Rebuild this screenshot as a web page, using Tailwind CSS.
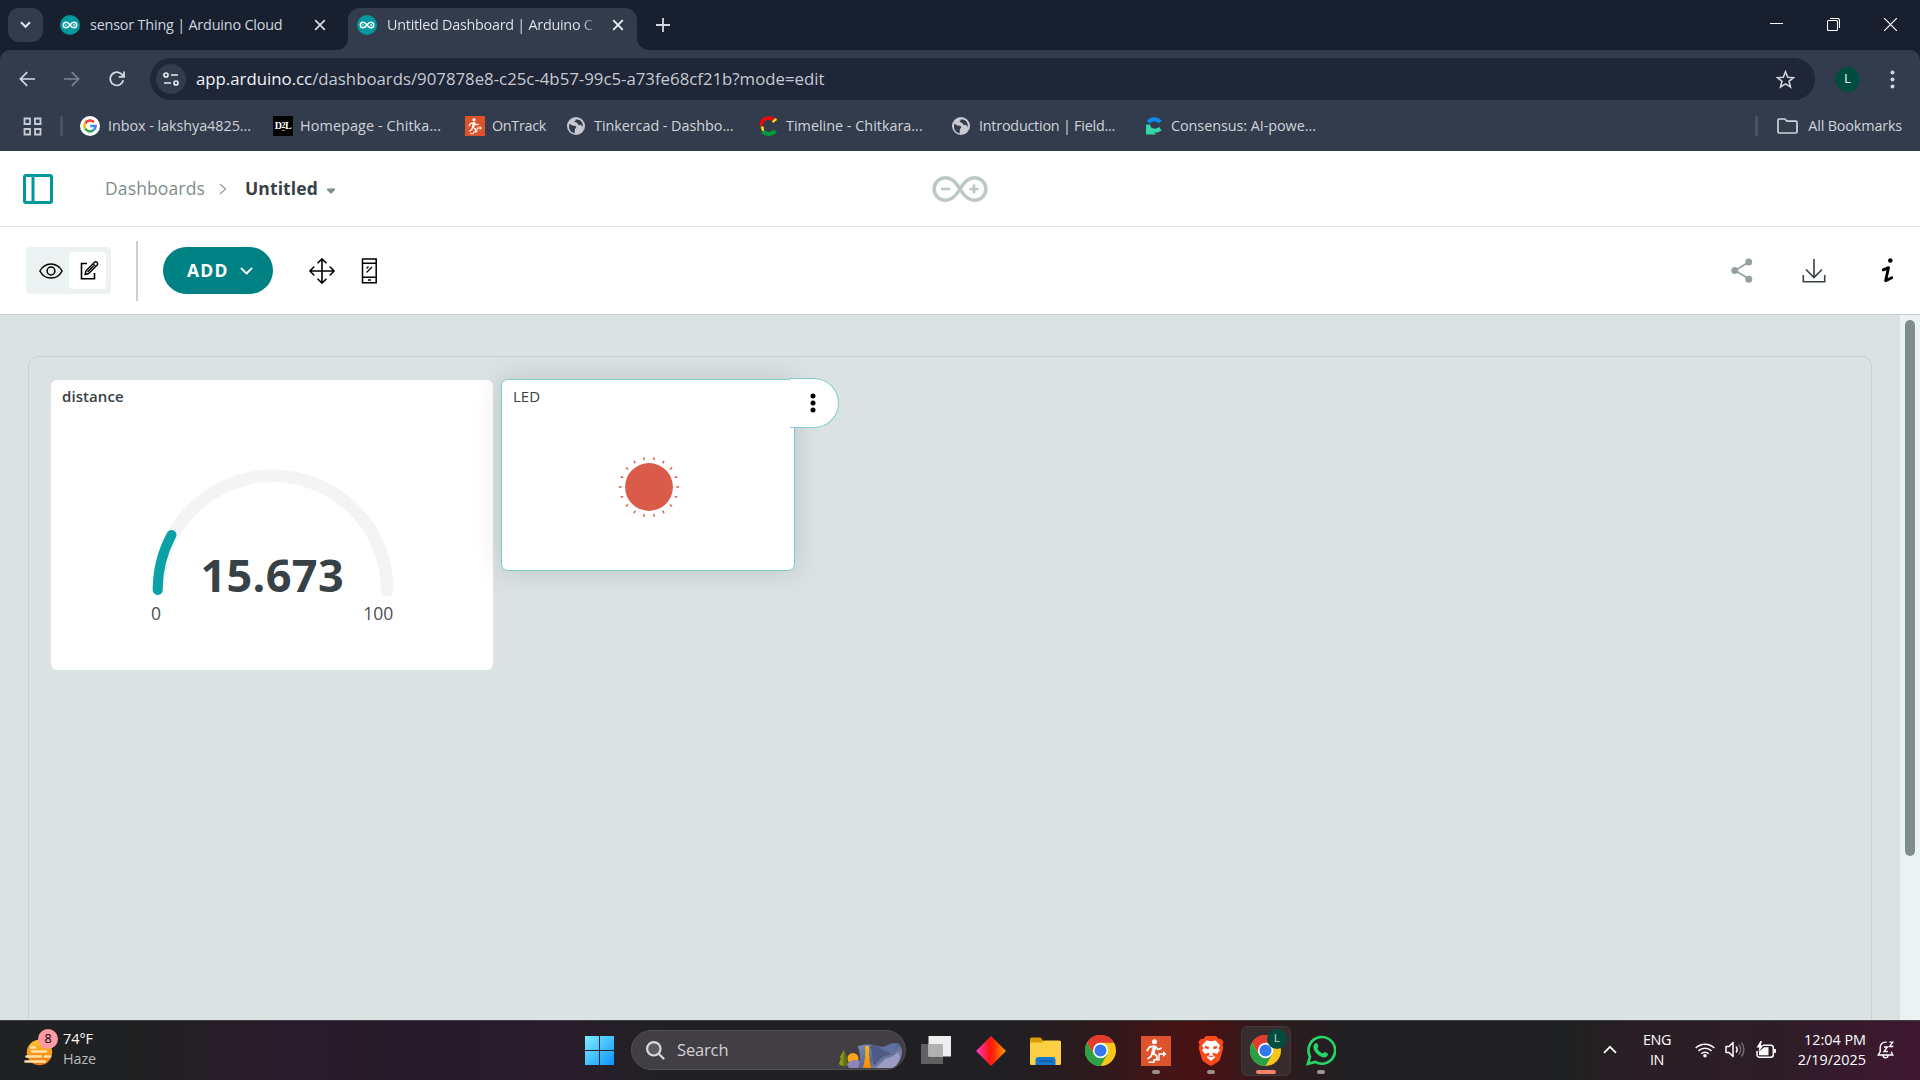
<!DOCTYPE html>
<html lang="en">
<head>
<meta charset="utf-8">
<title>Untitled Dashboard | Arduino Cloud</title>
<script src="https://cdn.jsdelivr.net/npm/@tailwindcss/browser@4"></script>
</head>
<body class="w-[1920px] h-[1080px] overflow-hidden flex flex-col font-['Open_Sans','Noto_Sans',sans-serif] bg-[#dae2e3]">

<svg class="hidden">
  <defs>
    <symbol id="ard" viewBox="0 0 20 20"><circle cx="10" cy="10" r="10" fill="#00979d"/><path d="M10 10C8.700 8.100 7.700 7.200 6.100 7.200a2.800 2.800 0 0 0 0 5.600C7.700 12.800 8.700 11.900 10 10s2.300-2.800 3.900-2.800a2.800 2.800 0 0 1 0 5.600C12.300 12.800 11.300 11.900 10 10Z" fill="none" stroke="#fff" stroke-width="1.500"/><path d="M5 10h2M13 10h2M14 9v2" stroke="#fff" stroke-width=".8"/></symbol>
    <symbol id="globe" viewBox="0 0 18 18"><circle cx="9" cy="9" r="9" fill="#c6c9d0"/><path d="M2.300 6.800 5.500 8.500c1.500.3 3.300.2 3.700 1.500.3 1.200-1.200 1.300-1.400 2.400-.1 1 .2 2.200-.3 4C4.500 16 2 13 2 9.800ZM8.800 2.200c.3 1.300-1.300 1.500-1.200 2.600.2 1 1.600.6 2.600 1.100.9.500.7 1.600 1.600 2 .9.500 1.500-.4 2.300 0 .7.400.6 1.400 1.700 1.800.3-3.500-1.300-5.400-3.300-6.600Z" fill="#333c4d"/></symbol>
    <symbol id="chrome" viewBox="0 0 30 30"><circle cx="15" cy="15" r="15" fill="#f9c61c"/><path d="M2 7.500A15 15 0 0 1 28 7.500H15l-6.500 11.200Z" fill="#e33b2e"/><path d="M2 7.500 8.600 18.800 15 22.300 21.500 18.800 15 30A15 15 0 0 1 2 7.500Z" fill="#2aa147"/><circle cx="15" cy="15" r="7.400" fill="#fff"/><circle cx="15" cy="15" r="5.800" fill="#2f78ee"/></symbol>
    <symbol id="ontrack" viewBox="0 0 30 30"><path fill="#dc532c" d="M0 0h30v30H0z"/><circle cx="13.500" cy="5.800" r="2.500" fill="#fff"/><path d="M14 10 11.800 17" stroke="#fff" stroke-width="3.400"/><path d="M13 10.200 8.500 11 6.200 14.500M14.500 10.500 17 13.500 20 12.300M12 17l3.800 3V23.500M11.300 17 10 20.500 7 22.500" fill="none" stroke="#fff" stroke-width="1.800" stroke-linecap="round" stroke-linejoin="round"/><path d="M7.500 26.300h5.500v-2.500h5V18h4.500" fill="none" stroke="#fff" stroke-width="1.400"/><path d="m22 15 3.500 3-3.500 3" fill="#fff"/></symbol>
  </defs>
</svg>

<!-- Tab strip -->
<div class="h-[50px] shrink-0 bg-[#182030] flex items-start text-[14.4px] text-[#d0d4df]">
  <div class="ml-2 mt-2 w-[35px] h-[34px] rounded-[11px] bg-[#333c4d] flex items-center justify-center">
    <svg width="11" height="8" viewBox="0 0 11 8"><path d="m1 1.300 4.500 4.500L10 1.300" fill="none" stroke="#e3e6ee" stroke-width="2"/></svg>
  </div>
  <div class="ml-[17px] h-[50px] w-[288px] flex items-center">
    <svg class="w-5 h-5 shrink-0"><use href="#ard"/></svg>
    <span class="ml-[10px] w-[224px] whitespace-nowrap tracking-[-0.19px]">sensor Thing | Arduino Cloud</span>
    <svg width="12" height="12" viewBox="0 0 12 12"><path d="m1.200 1.200 9.600 9.600M10.800 1.200 1.200 10.800" stroke="#d5d9e4" stroke-width="1.700"/></svg>
  </div>
  <div class="relative mt-2 w-[289px] h-[42px] bg-[#333c4d] rounded-t-[12px] flex items-center pb-2 text-[#e6e9f0]">
    <svg class="absolute -left-3 bottom-0" width="12" height="12"><path d="M12 0v12H0A12 12 0 0 0 12 0" fill="#333c4d"/></svg>
    <svg class="absolute -right-3 bottom-0" width="12" height="12"><path d="M0 0v12h12A12 12 0 0 1 0 0" fill="#333c4d"/></svg>
    <svg class="ml-[9px] w-5 h-5 shrink-0"><use href="#ard"/></svg>
    <span class="ml-[10px] w-[210px] whitespace-nowrap tracking-[-0.27px] bg-linear-to-r from-[#e6e9f0] from-92% to-[#e6e9f0]/15 bg-clip-text text-transparent">Untitled Dashboard | Arduino C</span>
    <svg class="ml-[15px]" width="12" height="12" viewBox="0 0 12 12"><path d="m1.200 1.200 9.600 9.600M10.800 1.200 1.200 10.800" stroke="#f0f2f7" stroke-width="1.800"/></svg>
  </div>
  <svg class="ml-[19px] mt-[18px]" width="14" height="14"><path d="M7 0v14M0 7h14" stroke="#d5d9e4" stroke-width="1.800"/></svg>
  <div class="ml-auto mr-[23px] mt-[18px] flex items-center gap-[44px]">
    <svg width="13" height="13"><path d="M0 5.500h13" stroke="#fff"/></svg>
    <svg width="13" height="13" viewBox="0 0 13 13"><path d="M.5 3.500a1 1 0 0 1 1-1h8a1 1 0 0 1 1 1v8a1 1 0 0 1-1 1h-8a1 1 0 0 1-1-1ZM3 .5h7.500a2 2 0 0 1 2 2V10" fill="none" stroke="#fff" stroke-width="1.100"/></svg>
    <svg width="13" height="13"><path d="m0 0 13 13M13 0 0 13" stroke="#fff" stroke-width="1.200"/></svg>
  </div>
</div>

<div class="h-[101px] shrink-0 bg-[#182030]">
<div class="h-full rounded-t-[10px] bg-[#333c4d] flex flex-col">
  <!-- Address row -->
  <div class="h-[58px] flex items-center">
    <div class="w-[150px] flex items-center pl-[19px]">
      <svg width="16" height="16" viewBox="0 0 16 16"><path d="M16 8H1.500M8.200 1.200 1.400 8l6.800 6.800" fill="none" stroke="#d5d9e4" stroke-width="1.700"/></svg>
      <svg class="ml-[29px]" width="16" height="16" viewBox="0 0 16 16"><path d="M0 8h14.500M7.800 1.200 14.600 8l-6.800 6.800" fill="none" stroke="#7c8493" stroke-width="1.700"/></svg>
      <svg class="ml-[29px]" width="16" height="16" viewBox="0 0 16 16"><path d="M14.300 9.300A6.600 6.600 0 1 1 12.800 3.400L14.500 5.200M15 .5v5.300H9.700" fill="none" stroke="#d5d9e4" stroke-width="1.800"/></svg>
    </div>
    <div class="w-[1665px] h-[42px] rounded-full bg-[#1e2637] flex items-center">
      <div class="ml-[6px] w-[30px] h-[30px] rounded-full bg-[#333c4d] flex items-center justify-center">
        <svg width="16" height="14" viewBox="0 0 16 14"><g fill="none" stroke="#e3e6ee" stroke-width="1.700"><circle cx="3" cy="3" r="2"/><circle cx="13" cy="11" r="2"/><path d="M8 3h7M1 11h7"/></g></svg>
      </div>
      <span class="ml-[10px] text-[16.8px] text-[#c7cad1] whitespace-nowrap"><span class="text-[#f1f3f8]">app.arduino.cc</span>/dashboards/907878e8-c25c-4b57-99c5-a73fe68cf21b?mode=edit</span>
      <svg class="ml-auto mr-[20px]" width="19" height="19" viewBox="0 0 19 19"><path d="m9.500 1.800 2.200 5.400 5.800.4-4.500 3.700 1.500 5.700-5-3.100-5 3.100L6 11.300 1.500 7.600l5.800-.4Z" fill="none" stroke="#d0d3da" stroke-width="1.600"/></svg>
    </div>
    <div class="ml-[20px] w-[25px] h-[25px] rounded-full bg-[#004d40] text-[#e0ece9] text-[12.500px] flex items-center justify-center font-['Roboto',sans-serif]">L</div>
    <svg class="ml-[30px]" width="5" height="19" fill="#d0d4df"><circle cx="2.500" cy="2.500" r="2"/><circle cx="2.500" cy="9.500" r="2"/><circle cx="2.500" cy="16.500" r="2"/></svg>
  </div>
  <!-- Bookmarks row -->
  <div class="h-[36px] flex items-center pl-[23px] text-[14.4px] text-[#d0d3da] whitespace-nowrap">
    <svg width="19" height="19" viewBox="0 0 19 19" fill="none" stroke="#c9ccd4" stroke-width="1.800"><path d="M1.500 1.500h5.500v5.500H1.500zM12 1.500h5.500v5.500H12zM1.500 12h5.500v5.500H1.500zM12 12h5.500v5.500H12z"/></svg>
    <div class="ml-[18px] w-[3px] h-5 rounded bg-[#4a5364]"></div>
    <div class="ml-[17px] w-[193px] flex items-center">
      <div class="w-5 h-5 rounded-full bg-white flex items-center justify-center">
        <svg width="14" height="14" viewBox="0 0 14 14" fill="none" stroke-width="2.600"><path d="M2.200 4.300A5.600 5.600 0 0 1 11 3.100" stroke="#ea4335"/><path d="M2.200 4.300a5.600 5.600 0 0 0 0 5.400" stroke="#fbbc05"/><path d="M2.200 9.700a5.600 5.600 0 0 0 8.600 1.200" stroke="#34a853"/><path d="M10.800 10.900A5.500 5.500 0 0 0 12.600 7H7.200" stroke="#4285f4"/></svg>
      </div>
      <span class="ml-2 tracking-[-0.06px]">Inbox - lakshya4825...</span>
    </div>
    <div class="w-[192px] flex items-center">
      <div class="w-5 h-5 bg-black text-white text-[10px] font-bold font-['Liberation_Serif',serif] flex items-center justify-center tracking-[-0.5px]">D<span class="text-[8px] border-b border-[#e87511] leading-[9px]">2</span>L</div>
      <span class="ml-[7px] tracking-[0.1px]">Homepage - Chitka...</span>
    </div>
    <div class="w-[102px] flex items-center">
      <svg class="w-5 h-5"><use href="#ontrack"/></svg>
      <span class="ml-[7px] tracking-[-0.33px]">OnTrack</span>
    </div>
    <div class="w-[192px] flex items-center">
      <svg class="w-[18px] h-[18px]"><use href="#globe"/></svg>
      <span class="ml-[9px] tracking-[-0.05px]">Tinkercad - Dashbo...</span>
    </div>
    <div class="w-[193px] flex items-center">
      <svg width="18" height="20" viewBox="0 0 18 20" fill="none"><path d="M2.300 9.500C2 5 5.500 2 9.500 2c2 0 4 .5 5.500 1.500" stroke="#f40606" stroke-width="3.600"/><path d="m13.500 6 4-3" stroke="#ffd90a" stroke-width="2.200"/><path d="M1.500 10.500h3.200l.4 4.500H3Z" fill="#ffd90a"/><path d="M3.800 15.300c2.200 3 8.200 4 12.700-.3" stroke="#079a3c" stroke-width="4"/></svg>
      <span class="ml-[9px]">Timeline - Chitkara...</span>
    </div>
    <div class="w-[193px] flex items-center">
      <svg class="w-[18px] h-[18px]"><use href="#globe"/></svg>
      <span class="ml-[9px] tracking-[-0.24px]">Introduction | Field...</span>
    </div>
    <div class="flex items-center">
      <svg width="18" height="19" viewBox="0 0 18 19" fill="none"><path d="M3.500 6.300C6 2.300 12 2.300 15 6" stroke="#0a8cf0" stroke-width="4.200"/><path d="M3 8.500c0 5 6 8.500 12.500 4.300" stroke="#35d5ac" stroke-width="4"/><path d="M1 9.500v9h10L5 12Z" fill="#35d5ac"/></svg>
      <span class="ml-2 tracking-[-0.06px]">Consensus: AI-powe...</span>
    </div>
    <div class="ml-auto w-[3px] h-5 rounded bg-[#4a5364]"></div>
    <svg class="ml-[19px]" width="21" height="16" viewBox="0 0 21 16"><path d="M1 2.200A1.200 1.200 0 0 1 2.200 1h5.600l2.200 2.200h8.800A1.200 1.200 0 0 1 20 4.400v9.400a1.200 1.200 0 0 1-1.200 1.200H2.200A1.200 1.200 0 0 1 1 13.800Z" fill="none" stroke="#d0d3da" stroke-width="1.700"/></svg>
    <span class="ml-[10px] mr-[18px] tracking-[-0.17px]">All Bookmarks</span>
  </div>
</div>
</div>

<!-- App header -->
<header class="h-[76px] shrink-0 bg-white border-b border-[#dae3e3] flex items-center">
  <svg class="ml-[23px]" width="30" height="30"><rect x="1.500" y="1.500" width="27" height="27" rx="1.500" fill="none" stroke="#00979d" stroke-width="3"/><path d="M10 2v26" stroke="#00979d" stroke-width="3"/></svg>
  <nav class="ml-[52px] w-[300px] flex items-center text-[17.5px]">
    <span class="text-[#7f8c8d] tracking-[0.13px]">Dashboards</span>
    <svg class="ml-[14px]" width="8" height="12"><path d="m1 1 5.500 5L1 11" fill="none" stroke="#95a5a6" stroke-width="1.400"/></svg>
    <span class="ml-[18px] font-bold text-[#374146] tracking-[0.12px]">Untitled</span>
    <svg class="ml-[9px] mt-1" width="8" height="6"><path d="M0 .5h8V2L4.500 5.500h-1L0 2Z" fill="#7f8c8d"/></svg>
  </nav>
  <svg class="ml-[526px]" width="58" height="26" viewBox="0 0 58 26" fill="none" stroke="#bdc7c8"><path d="M29 13C25 6 21 1.800 14.500 1.800a11.400 11.200 0 0 0 0 22.400C21 24.200 25 20 29 13S37 1.800 43.500 1.800a11.400 11.200 0 0 1 0 22.400C37 24.200 33 20 29 13Z" stroke-width="3.500"/><path d="M10 13h9M38.500 13h9M43 8.500v9" stroke-width="2.600"/></svg>
</header>

<!-- Toolbar -->
<div class="h-[88px] shrink-0 bg-white border-b border-[#c3cfd0] flex items-center">
  <div class="ml-[26px] w-[85px] h-[47px] rounded bg-[#ecf1f1] flex items-center p-[5px]">
    <div class="w-[38px] flex pl-2">
      <svg class="shrink-0" width="24" height="16" viewBox="0 0 24 16" fill="none" stroke="#000" stroke-width="1.500"><path d="M.9 8C3 4 7 .9 12 .9S21 4 23.100 8C21 12 17 15.100 12 15.100S3 12 .9 8Z"/><circle cx="12" cy="8" r="3.900"/></svg>
    </div>
    <div class="w-[37px] h-[37px] rounded bg-white flex items-center justify-center shrink-0 pl-1">
      <svg width="19" height="19" viewBox="0 0 19 19" fill="none" stroke="#000" stroke-width="1.600"><path d="M7 2.500H1.500v15.300h13V12"/><path d="M5 13.500 6 9.800 14.500 1.300a1.600 1.600 0 0 1 2.300 0l.4.400a1.600 1.600 0 0 1 0 2.300L8.700 12.500ZM13 2.900l2.700 2.700M7.500 11l6-6" stroke-linejoin="round" stroke-width="1.400"/></svg>
    </div>
  </div>
  <div class="ml-[25px] w-[2px] h-[60px] bg-[#c9d2d3]"></div>
  <button class="ml-[25px] w-[110px] h-[47px] rounded-full bg-[#008184] text-white font-bold text-[17.5px] tracking-[1.2px] flex items-center pl-6">ADD
    <svg class="ml-[11px]" width="13" height="8"><path d="m1.500 1.500 5 5 5-5" fill="none" stroke="#fff" stroke-width="1.800" stroke-linecap="round" stroke-linejoin="round"/></svg>
  </button>
  <svg class="ml-[36px]" width="26" height="26" viewBox="0 0 26 26" fill="none" stroke="#000" stroke-width="1.600" stroke-linecap="round" stroke-linejoin="round"><path d="M13 1v24M1 13h24M9 4.800 13 .9l4 3.900M9 21.200l4 3.900 4-3.900M4.800 9 .9 13l3.900 4M21.200 9l3.900 4-3.900 4"/></svg>
  <svg class="ml-[26px]" width="17" height="26" viewBox="0 0 17 26" fill="none" stroke="#000" stroke-width="1.500"><path d="M1.500 1h13.700v23.800H1.500ZM1.500 5.200H15M1.500 19.300H15"/><path d="m5.500 10.500 2-2M5.500 14.500l5.500-5.500" stroke-width="1.300"/><path d="M7 22h3"/></svg>
  <div class="ml-auto flex items-center">
    <svg width="22" height="25" viewBox="0 0 22 25"><path d="M18 4 4 12.500 18 21" fill="none" stroke="#95a0a3" stroke-width="1.600"/><g fill="#95a0a3"><circle cx="17.700" cy="3.900" r="3.500"/><circle cx="3.800" cy="12.500" r="3.500"/><circle cx="17.700" cy="21.200" r="3.500"/></g></svg>
    <svg class="ml-[49px]" width="24" height="24" viewBox="0 0 24 24" fill="none" stroke="#374146" stroke-width="1.600"><path d="M12 0v18M4 10.500 12 18.500l8-8M1.300 16v6.800h21.400V16"/></svg>
    <svg class="ml-[56px] mr-[27px]" width="11" height="25" viewBox="0 0 11 25"><circle cx="8.300" cy="2.500" r="2.300"/><path d="M1.200 11.800 6.500 9.700 3.600 22.700 9.800 19.700" fill="none" stroke="#000" stroke-width="2.900" stroke-linejoin="round" stroke-linecap="round"/></svg>
  </div>
</div>

<!-- Dashboard canvas -->
<main class="h-[705px] shrink-0 overflow-hidden flex bg-[#dae2e3]">
  <div class="w-[1900px] pl-7 pt-[41px]">
    <section class="w-[1844px] h-[760px] rounded-[10px] border border-[#c9d2d3] pl-[22px] pt-[22px] flex items-start text-[#374146]">
      <article class="w-[442px] h-[290px] mt-px rounded-[6px] bg-white flex flex-col">
        <h2 class="pl-[11px] pt-[6px] text-[15px] leading-5 font-semibold tracking-[0.08px]">distance</h2>
        <svg class="mt-[55px]" width="442" height="200" viewBox="0 81 442 200">
          <path d="M107.700 210A114.300 114.300 0 0 1 336.300 210" fill="none" stroke="#f4f4f4" stroke-width="12.600" stroke-linecap="round"/>
          <path d="M106.700 210A115.300 115.300 0 0 1 120.500 155" fill="none" stroke="#0ca1a6" stroke-width="10" stroke-linecap="round"/>
          <text x="221.200" y="212" text-anchor="middle" font-size="45" font-weight="700" fill="#374146" letter-spacing=".35">15.673</text>
          <text x="105" y="240" text-anchor="middle" font-size="17.500" fill="#4a5054">0</text>
          <text x="327.300" y="240" text-anchor="middle" font-size="17.500" fill="#4a5054">100</text>
        </svg>
      </article>
      <article class="relative ml-2 w-[294px] h-[192px] rounded-[7px] bg-white border border-[#7fcbcd] shadow-[0_0_25px_rgba(95,110,95,0.24)] flex flex-col">
        <h2 class="pl-[11px] pt-[6px] text-[15px] leading-5 font-medium">LED</h2>
        <svg class="ml-[115px] mt-[49px]" width="64" height="64" viewBox="-32 -32 64 64">
          <circle r="23.900" fill="#da5b4a"/>
          <circle r="28.700" fill="none" stroke="#da5b4a" stroke-width="2.800" pathLength="180" stroke-dasharray="1.400 8.600" stroke-dashoffset=".7"/>
        </svg>
        <div class="absolute left-[288px] -top-[2px] w-[49px] h-[50px] rounded-r-full bg-white border border-l-0 border-[#7fcbcd] flex items-center justify-center pr-[2px]">
          <svg width="6" height="20"><circle cx="3" cy="3" r="2.500"/><circle cx="3" cy="10" r="2.500"/><circle cx="3" cy="17" r="2.500"/></svg>
        </div>
      </article>
    </section>
  </div>
  <div class="w-5 bg-[#ecf1f1] pl-[5px] pt-[5px]"><div class="w-[10px] h-[536px] rounded-full bg-[#7f8c8d]"></div></div>
</main>

<!-- Taskbar -->
<footer class="h-[60px] shrink-0 border-t border-[#3c4040] bg-[linear-gradient(90deg,#202122_0px,#202122_130px,#2b1c2b_270px,#261c29_440px,#2a1d2c_560px,#212124_660px,#202024_1000px,#2c1a1d_1090px,#421517_1160px,#481214_1200px,#301a1c_1270px,#202023_1350px,#202122_1570px,#2b1e25_1640px,#2e1d27_1780px,#401730_1920px)] flex items-center text-white text-[14.4px]">
  <div class="w-[585px] pl-6 pb-[3px] flex items-center">
    <div class="relative w-[36px] h-[36px]">
      <svg width="34" height="36" viewBox="0 0 34 36"><defs><linearGradient id="sun" x2="0" y2="1"><stop stop-color="#ffc22c"/><stop offset="1" stop-color="#f5740d"/></linearGradient></defs><circle cx="15.500" cy="21.500" r="12.700" fill="url(#sun)"/><path d="M7 16.500h4M8 20.500h14M2.500 25.500H17M21 25.500h5M1.500 30.500H21" stroke="#fbe3a9" stroke-width="2.600" stroke-linecap="round"/></svg>
      <div class="absolute left-[14px] -top-[2px] w-5 h-5 rounded-full bg-[#ff99a4] text-black text-[12.500px] leading-5 text-center">8</div>
    </div>
    <div class="ml-[3px] leading-5">
      <div>74°F</div>
      <div class="text-[#b9babb] tracking-[-0.11px]">Haze</div>
    </div>
  </div>
  <svg width="29" height="29" viewBox="0 0 29 29"><defs><linearGradient id="win" x2="1" y2="1"><stop stop-color="#7deeff"/><stop offset="1" stop-color="#0c93fb"/></linearGradient></defs><path d="M0 0h14v14H0zM15 0h14v14H15zM0 15h14v14H0zM15 15h14v14H15z" fill="url(#win)"/></svg>
  <div class="ml-[17px] mb-px w-[275px] h-10 rounded-full bg-[#413f44] border border-[#504e53] flex items-center pl-[14px] overflow-hidden">
    <svg width="19" height="19" viewBox="0 0 19 19" fill="none" stroke="#d6dada" stroke-width="2.200" stroke-linecap="round"><circle cx="7.800" cy="7.800" r="6.700" fill="#5d5d61"/><path d="m13 13 4.500 4.500"/></svg>
    <span class="ml-3 text-[16.500px] tracking-[-0.15px] text-[#d2d2d4]">Search</span>
    <svg class="ml-auto mr-[2px] mt-3" width="64" height="26" viewBox="0 0 64 26"><defs><linearGradient id="rk" x2="1" y2="1"><stop stop-color="#7c8ec0"/><stop offset=".5" stop-color="#59678f"/><stop offset="1" stop-color="#a7a5c8"/></linearGradient><linearGradient id="wf" x2="0" y2="1"><stop stop-color="#f6b717"/><stop offset="1" stop-color="#ff8a00"/></linearGradient></defs>
      <path d="M5 7 0.500 15H2L0 21c2 3 8 3 9 0l-2-6h1Z" fill="#5f7414"/><path d="M5 7 .5 15H2L0 21l4 2Z" fill="#93951a"/>
      <circle cx="14" cy="15.500" r="5.500" fill="#fba51d"/><path d="M8 22c2-5 7-6 13-4v7H10Z" fill="#8d86b2"/>
      <path d="M19 3C26 .5 36 1 43 4c5-1 9-5 15-4 5 2 6 8 4 14-2 6-6 11-10 11H19c3-7 2-15 0-22Z" fill="url(#rk)"/><path d="M31 3c5-2 8-1 10 2l12 7c-6 0-9 1-11 3l-7 8c-2-6-1-13-4-20Z" fill="#4d5a85"/><path d="M46 16c5-1 9-3 13-7l2 5c-1 5-4 10-8 11H37Z" fill="#9b9cc6"/><path d="m44 5 14-5c-1 5-4 9-8 9Z" fill="#5e72a6"/>
      <path d="M26 3h4c0 7 0 15 2 22h-8c2-8 3-15 2-22" fill="url(#wf)"/></svg>
  </div>
  <div class="ml-[2px] flex items-center h-full">
    <div class="w-[55px] flex justify-center">
      <svg width="30" height="29" viewBox="0 0 30 29"><path d="M0 8h22v20H0z" fill="#5f6060"/><path d="M7.500 0H30v20.500H7.500z" fill="#efefef"/><path d="M7.500 8H22v12.500H7.500z" fill="#b1b1b2"/></svg>
    </div>
    <div class="w-[55px] flex justify-center">
      <svg width="30" height="30" viewBox="0 0 30 30"><defs><linearGradient id="dm"><stop stop-color="#ff3cc8"/><stop offset=".45" stop-color="#ff1616"/><stop offset=".6" stop-color="#ff2a08"/><stop offset="1" stop-color="#ffa200"/></linearGradient></defs><path d="m15 0 15 15-15 15L0 15Z" fill="url(#dm)"/></svg>
    </div>
    <div class="w-[55px] flex justify-center">
      <svg width="31" height="28" viewBox="0 0 31 28"><path d="M0 2a1.500 1.500 0 0 1 1.500-1.500h9L13 3.500V10H0Z" fill="#dd9b07"/><path d="M0 5.500h11L14 3.500h15.500A1.500 1.500 0 0 1 31 5v21.500a1.500 1.500 0 0 1-1.500 1.500h-28A1.500 1.500 0 0 1 0 26.500Z" fill="#fdcf45"/><path d="M5.500 28v-5a3 3 0 0 1 3-3h14a3 3 0 0 1 3 3v5Z" fill="#1379ce"/><path d="M9.500 24h12" stroke="#0b55a0" stroke-width="1.600" stroke-linecap="round"/></svg>
    </div>
    <div class="w-[55px] flex justify-center"><svg class="w-[31px] h-[31px]"><use href="#chrome"/></svg></div>
    <div class="relative w-[55px] h-full flex items-center justify-center">
      <svg class="w-[30px] h-[30px]"><use href="#ontrack"/></svg>
      <div class="absolute bottom-[6px] left-[24px] w-2 h-[4px] rounded-full bg-[#9e8d8f]"></div>
    </div>
    <div class="relative w-[55px] h-full flex items-center justify-center">
      <svg width="26" height="30" viewBox="0 0 26 30"><path d="M8 0h10l3 3 2-.3 2.500 3.300-1 3 .8 3-3.300 11.500c-.7 2-6 5-9 6.500-3-1.500-8.300-4.500-9-6.500L.7 12l.8-3-1-3L3 2.700 5 3Z" fill="#fb4a1d"/><path d="M8.500 4.500 13 5.300l4.500-.8L22 9.500l-1.500 3L22 14l-3 4-4-1.500-.5 2.500 3 2L13 25l-4.500-4 3-2-.5-2.500L7 18l-3-4 1.500-1.500L4 9.500Z" fill="#fff"/><path d="m7 9.800 4 .9-.5 2.500-3.700-1ZM19 9.800l-4 .9.500 2.500 3.700-1ZM10 21l3-1.500 3 1.500" fill="#fb4a1d"/></svg>
      <div class="absolute bottom-[6px] left-[24px] w-2 h-[4px] rounded-full bg-[#9e8d8f]"></div>
    </div>
    <div class="relative w-[55px] h-full flex items-center justify-center">
      <div class="w-[50px] h-[50px] rounded-[6px] bg-[#372c2e] border border-[#433839] flex items-center justify-center"><svg class="w-[31px] h-[31px]"><use href="#chrome"/></svg></div>
      <div class="absolute left-[29px] top-[8px] w-5 h-5 rounded-full bg-[#044c40] text-[#b9d3cd] text-[11px] leading-5 text-center font-['Roboto',sans-serif]">L</div>
      <div class="absolute bottom-[6px] left-[18px] w-5 h-[4px] rounded-full bg-[#f58268]"></div>
    </div>
    <div class="relative w-[55px] h-full flex items-center justify-center">
      <svg width="30" height="31" viewBox="0 0 30 31"><path d="M1.900 28.900 4 21.500A13.300 13.300 0 1 1 9.200 26.900Z" fill="none" stroke="#25d366" stroke-width="2.700"/><path d="M8.800 8.600c.9-.9 2.100-.7 2.600.2l1 2.300c.2.700-.2 1.200-1.100 2.200 1.200 2.500 3 4.200 5.600 5.300 1.100-1.400 1.500-1.800 2.100-1.500l2.500 1.200c1 .6.300 2.500-.7 3.300-1.500 1.200-3.600 1-6.500-.4-3-1.500-5.600-4.400-6.500-6.800-.8-2.200-.4-4.500 1-5.800" fill="#25d366"/></svg>
      <div class="absolute bottom-[6px] left-[24px] w-2 h-[4px] rounded-full bg-[#97979a]"></div>
    </div>
  </div>
  <div class="ml-auto mr-[25px] pb-[2px] flex items-center">
    <svg width="14" height="9"><path d="m1 7.800 6-6 6 6" fill="none" stroke="#fff" stroke-width="1.700"/></svg>
    <div class="ml-[25px] w-[30px] text-center leading-5 tracking-[-0.43px]"><div>ENG</div><div>IN</div></div>
    <svg class="ml-[23px]" width="20" height="16" viewBox="0 0 20 16" fill="none" stroke="#fff" stroke-width="1.500"><path d="M.7 6a13.200 13.200 0 0 1 18.600 0M3.500 8.900a9.200 9.200 0 0 1 13 0M6.300 11.700a5.300 5.300 0 0 1 7.400 0"/><circle cx="10" cy="13.800" r="1.800" fill="#fff" stroke="none"/></svg>
    <svg class="ml-[10px]" width="21" height="17" viewBox="0 0 21 17" fill="none" stroke="#fff" stroke-width="1.500"><path d="M1 5.500h3L8 1.500v14l-4-4H1Z" stroke-linejoin="round"/><path d="M11 5.500c1.300 1.700 1.300 4.300 0 6"/><path d="M13.700 3.500c2.500 3 2.500 7 0 10M16.300 1.500c3.500 4 3.500 10 0 14" stroke="#75686f"/></svg>
    <svg class="ml-[10px]" width="20" height="18" viewBox="0 0 20 18"><path d="M7 4.200h8A2.500 2.500 0 0 1 17.300 6.700v7a2.500 2.500 0 0 1-2.500 2.500H3.500A2.500 2.500 0 0 1 1 13.700V10" fill="none" stroke="#fff" stroke-width="1.500"/><path d="M18 8h1.200a.8.800 0 0 1 .8.800v2.500a.8.800 0 0 1-.8.800H18ZM3 14.200V10.500L8 6.200h4.500v8Z" fill="#fff"/><path d="M4.500 0 .5 6.500h2.800L2.500 11 7.500 4.200H4.800L6 0Z" fill="#fff"/></svg>
    <div class="ml-[19px] w-[71px] text-right leading-5"><div>12:04 PM</div><div>2/19/2025</div></div>
    <svg class="ml-[11px]" width="18" height="18" viewBox="0 0 18 18" fill="none" stroke="#fff" stroke-width="1.400"><path d="M9.500 1.200C5.500.8 3.200 3.500 3.200 6.500v4L1.300 14h14.400l-1.500-3.200M6 14.500c.3 2.900 4.800 2.900 5 0"/><path d="M7 6h3.500L7 10.500h3.800M12.500 1.200h3.300L12.500 5.500h3.800" stroke-width="1.300"/></svg>
  </div>
</footer>
</body>
</html>
